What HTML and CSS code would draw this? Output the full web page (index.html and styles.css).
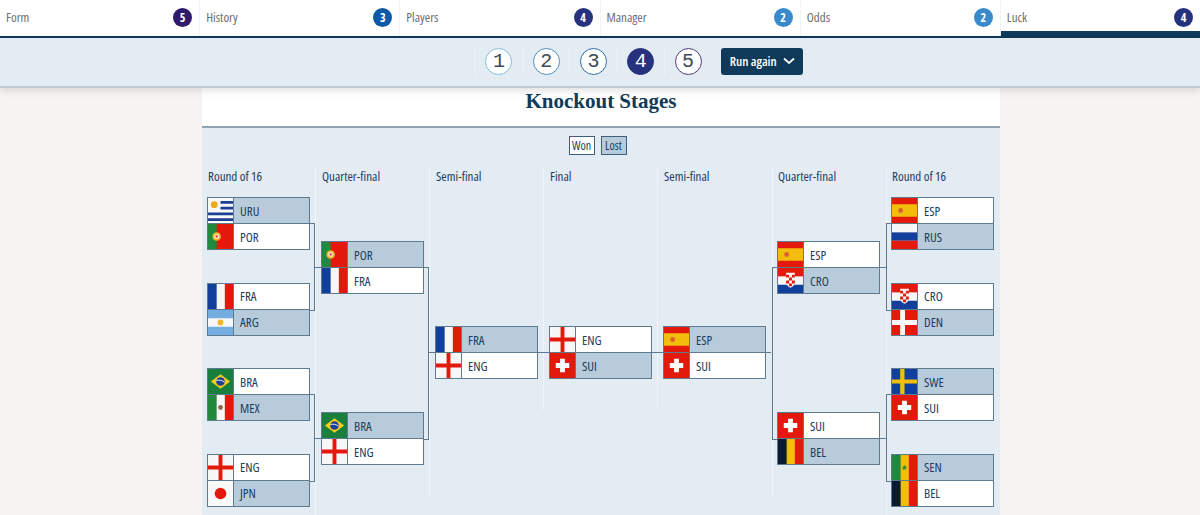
FILE: index.html
```html
<!DOCTYPE html>
<html lang="en">
<head>
    <meta charset="UTF-8">
    <meta name="viewport" content="width=device-width, initial-scale=1.0">
    <title>Knockout Stages</title>
    <link rel="stylesheet" href="styles.css">
</head>
<body>

    <!-- Flag symbols -->
    <svg class="flag-defs" xmlns="http://www.w3.org/2000/svg">
        <symbol id="f-uru" viewBox="0 0 26 26">
            <rect width="26" height="26" fill="#f7f7f7"/>
            <path d="M13 3h13v3H13zM13 9h13v3H13zM0 15h26v3H0zM0 21h26v3H0z" fill="#1d3f94"/>
            <circle cx="6.500" cy="7" r="3.500" fill="#f0a818"/>
        </symbol>
        <symbol id="f-por" viewBox="0 0 26 26">
            <rect width="26" height="26" fill="#e3190c"/>
            <rect width="9" height="26" fill="#1f8a3b"/>
            <circle cx="9" cy="13" r="4.500" fill="#f2b42a"/>
            <circle cx="9" cy="13" r="2.500" fill="#f4f0e8"/>
            <circle cx="9" cy="13" r="1.200" fill="#d33"/>
        </symbol>
        <symbol id="f-fra" viewBox="0 0 26 26">
            <rect width="26" height="26" fill="#f7f7f7"/>
            <rect width="9" height="26" fill="#123f9c"/>
            <rect x="17.500" width="8.500" height="26" fill="#e3190c"/>
        </symbol>
        <symbol id="f-arg" viewBox="0 0 26 26">
            <rect width="26" height="26" fill="#f7f7f7"/>
            <path d="M0 0h26v8.700H0zM0 17.300h26V26H0z" fill="#75ade0"/>
            <circle cx="13" cy="13" r="3" fill="#f0b828"/>
        </symbol>
        <symbol id="f-bra" viewBox="0 0 26 26">
            <rect width="26" height="26" fill="#1a7f3c"/>
            <path d="M13 5.500 23 13 13 20.500 3 13z" fill="#f6ce1a"/>
            <circle cx="13" cy="13" r="4.500" fill="#1d3f94"/>
            <path d="M8.700 12c3-.8 6-.3 8.500 1.600" stroke="#f4f4f4" fill="none"/>
        </symbol>
        <symbol id="f-mex" viewBox="0 0 26 26">
            <rect width="26" height="26" fill="#f7f7f7"/>
            <rect width="9" height="26" fill="#1f8a3b"/>
            <rect x="17.500" width="8.500" height="26" fill="#e3190c"/>
            <circle cx="13" cy="13" r="2.500" fill="#8a6a44"/>
        </symbol>
        <symbol id="f-eng" viewBox="0 0 26 26">
            <rect width="26" height="26" fill="#f7f7f7"/>
            <path d="M11 0h4v11h11v4H15v11h-4V15H0v-4h11z" fill="#e3190c"/>
        </symbol>
        <symbol id="f-jpn" viewBox="0 0 26 26">
            <rect width="26" height="26" fill="#f9f9f9"/>
            <circle cx="13" cy="13" r="6" fill="#e3190c"/>
        </symbol>
        <symbol id="f-sui" viewBox="0 0 26 26">
            <rect width="26" height="26" fill="#e3190c"/>
            <path d="M10.500 6h5v4.500H20v5h-4.500V20h-5v-4.500H6v-5h4.500z" fill="#fff"/>
        </symbol>
        <symbol id="f-esp" viewBox="0 0 26 26">
            <rect width="26" height="26" fill="#e3190c"/>
            <rect y="6.500" width="26" height="13" fill="#f2bd0d"/>
            <circle cx="9" cy="13" r="2.500" fill="#d9602a"/>
        </symbol>
        <symbol id="f-rus" viewBox="0 0 26 26">
            <rect width="26" height="26" fill="#f7f7f7"/>
            <rect y="8.700" width="26" height="8.700" fill="#123f9c"/>
            <rect y="17.400" width="26" height="8.600" fill="#e3190c"/>
        </symbol>
        <symbol id="f-cro" viewBox="0 0 26 26">
            <rect width="26" height="26" fill="#f7f7f7"/>
            <rect width="26" height="8.700" fill="#e3190c"/>
            <rect y="17.400" width="26" height="8.600" fill="#123f9c"/>
            <path d="M8.500 5h9v10c0 3-2.500 4.500-4.500 5.500C11 19.500 8.500 18 8.500 15z" fill="#f7f7f7"/>
            <path d="M8.500 7h3v3h-3zM14.500 7h3v3h-3zM11.500 10h3v3h-3zM8.500 13h3v3h-3zM14.500 13h3v3h-3zM11.500 16h3v3h-3z" fill="#e3190c"/>
        </symbol>
        <symbol id="f-den" viewBox="0 0 26 26">
            <rect width="26" height="26" fill="#e3190c"/>
            <path d="M8.500 0h5v10.500H26v5H13.500V26h-5V15.500H0v-5h8.500z" fill="#f7f7f7"/>
        </symbol>
        <symbol id="f-swe" viewBox="0 0 26 26">
            <rect width="26" height="26" fill="#123f9c"/>
            <path d="M8.500 0h4.500v11h13v4H13v11H8.500V15H0v-4h8.500z" fill="#f2bd0d"/>
        </symbol>
        <symbol id="f-sen" viewBox="0 0 26 26">
            <rect width="26" height="26" fill="#f2bd0d"/>
            <rect width="9" height="26" fill="#1f8a3b"/>
            <rect x="17.500" width="8.500" height="26" fill="#e3190c"/>
            <path d="m13 10 .8 2.200h2.300l-1.900 1.400.7 2.300-1.900-1.400-1.900 1.400.7-2.300-1.900-1.400h2.300z" fill="#1f8a3b"/>
        </symbol>
        <symbol id="f-bel" viewBox="0 0 26 26">
            <rect width="26" height="26" fill="#f2bd0d"/>
            <rect width="9" height="26" fill="#0a1a30"/>
            <rect x="17.500" width="8.500" height="26" fill="#e3190c"/>
        </symbol>
    </svg>

    <!-- Top tabs -->
    <nav class="tabs">
        <a class="tab">Form <span class="badge badge-5">5</span></a>
        <a class="tab">History <span class="badge badge-3">3</span></a>
        <a class="tab">Players <span class="badge badge-4">4</span></a>
        <a class="tab">Manager <span class="badge badge-2">2</span></a>
        <a class="tab">Odds <span class="badge badge-2">2</span></a>
        <a class="tab tab-active">Luck <span class="badge badge-4">4</span></a>
    </nav>

    <!-- Score picker -->
    <div class="picker">
        <span class="pick-wrap"><span class="pick pick-1">1</span></span>
        <span class="pick-wrap"><span class="pick pick-2">2</span></span>
        <span class="pick-wrap"><span class="pick pick-3">3</span></span>
        <span class="pick-wrap"><span class="pick pick-4">4</span></span>
        <span class="pick-wrap"><span class="pick pick-5">5</span></span>
        <button class="run-btn" type="button">Run again
            <svg width="12" height="8" viewBox="0 0 12 8"><path d="M1 1.500 6 6l5-4.500" fill="none" stroke="#fff" stroke-width="1.800"/></svg>
        </button>
    </div>

    <main class="article">
        <h2 class="article-title">Knockout Stages</h2>

        <section class="bracket-panel">
            <div class="legend">
                <span class="legend-item">Won</span>
                <span class="legend-item legend-lost">Lost</span>
            </div>

            <div class="bracket">
                <!-- Left round of 16 -->
                <div class="round round-16 border-right">
                    <h3>Round of 16</h3>
                    <div class="match link-next">
                        <div class="team lost"><svg><use href="#f-uru"/></svg><span>URU</span></div>
                        <div class="team"><svg><use href="#f-por"/></svg><span>POR</span></div>
                    </div>
                    <div class="match">
                        <div class="team"><svg><use href="#f-fra"/></svg><span>FRA</span></div>
                        <div class="team lost"><svg><use href="#f-arg"/></svg><span>ARG</span></div>
                    </div>
                    <div class="match link-next">
                        <div class="team"><svg><use href="#f-bra"/></svg><span>BRA</span></div>
                        <div class="team lost"><svg><use href="#f-mex"/></svg><span>MEX</span></div>
                    </div>
                    <div class="match">
                        <div class="team"><svg><use href="#f-eng"/></svg><span>ENG</span></div>
                        <div class="team lost"><svg><use href="#f-jpn"/></svg><span>JPN</span></div>
                    </div>
                </div>

                <!-- Left quarter-finals -->
                <div class="round round-qf border-right">
                    <h3>Quarter-final</h3>
                    <div class="match link-next">
                        <div class="team lost"><svg><use href="#f-por"/></svg><span>POR</span></div>
                        <div class="team"><svg><use href="#f-fra"/></svg><span>FRA</span></div>
                    </div>
                    <div class="match">
                        <div class="team lost"><svg><use href="#f-bra"/></svg><span>BRA</span></div>
                        <div class="team"><svg><use href="#f-eng"/></svg><span>ENG</span></div>
                    </div>
                </div>

                <!-- Middle -->
                <div class="round round-mid round-mid-left border-right">
                    <h3>Semi-final</h3>
                    <div class="match">
                        <div class="team lost"><svg><use href="#f-fra"/></svg><span>FRA</span></div>
                        <div class="team"><svg><use href="#f-eng"/></svg><span>ENG</span></div>
                    </div>
                </div>
                <div class="round round-mid border-right">
                    <h3>Final</h3>
                    <div class="match">
                        <div class="team"><svg><use href="#f-eng"/></svg><span>ENG</span></div>
                        <div class="team lost"><svg><use href="#f-sui"/></svg><span>SUI</span></div>
                    </div>
                </div>
                <div class="round round-mid round-mid-right">
                    <h3>Semi-final</h3>
                    <div class="match">
                        <div class="team lost"><svg><use href="#f-esp"/></svg><span>ESP</span></div>
                        <div class="team"><svg><use href="#f-sui"/></svg><span>SUI</span></div>
                    </div>
                </div>

                <!-- Right quarter-finals -->
                <div class="round round-qf side-right border-left">
                    <h3>Quarter-final</h3>
                    <div class="match link-next">
                        <div class="team"><svg><use href="#f-esp"/></svg><span>ESP</span></div>
                        <div class="team lost"><svg><use href="#f-cro"/></svg><span>CRO</span></div>
                    </div>
                    <div class="match">
                        <div class="team"><svg><use href="#f-sui"/></svg><span>SUI</span></div>
                        <div class="team lost"><svg><use href="#f-bel"/></svg><span>BEL</span></div>
                    </div>
                </div>

                <!-- Right round of 16 -->
                <div class="round round-16 side-right border-left">
                    <h3>Round of 16</h3>
                    <div class="match link-next">
                        <div class="team"><svg><use href="#f-esp"/></svg><span>ESP</span></div>
                        <div class="team lost"><svg><use href="#f-rus"/></svg><span>RUS</span></div>
                    </div>
                    <div class="match">
                        <div class="team"><svg><use href="#f-cro"/></svg><span>CRO</span></div>
                        <div class="team lost"><svg><use href="#f-den"/></svg><span>DEN</span></div>
                    </div>
                    <div class="match link-next">
                        <div class="team lost"><svg><use href="#f-swe"/></svg><span>SWE</span></div>
                        <div class="team"><svg><use href="#f-sui"/></svg><span>SUI</span></div>
                    </div>
                    <div class="match">
                        <div class="team lost"><svg><use href="#f-sen"/></svg><span>SEN</span></div>
                        <div class="team"><svg><use href="#f-bel"/></svg><span>BEL</span></div>
                    </div>
                </div>
            </div>
        </section>
    </main>

</body>
</html>
```

FILE: styles.css
```css
/* General Styles */
* {
    margin: 0;
    padding: 0;
    box-sizing: border-box;
}

html, body {
    height: 515px;
    overflow: hidden;
}

body {
    font-family: 'Open Sans', 'Noto Sans', sans-serif;
    font-stretch: 75%;
    background-color: #f5f4f2;
    color: #1d3d5c;
}

.flag-defs {
    display: none;
}

/* Top tabs */
.tabs {
    display: flex;
    height: 38px;
    margin-right: -1px;
    background-color: white;
    border-bottom: 2px solid #0f3a5a;
}

.tab {
    position: relative;
    flex: 1;
    display: flex;
    align-items: center;
    justify-content: space-between;
    padding: 0 7px 2px 6px;
    font-size: 13px;
    color: #6e6e6e;
    border-right: 1px solid #f3f3f3;
}

.tab-active::after {
    content: "";
    position: absolute;
    left: 0;
    right: 0;
    bottom: -2px;
    height: 7px;
    background-color: #0f3a5a;
}

.badge {
    width: 19px;
    height: 19px;
    border-radius: 50%;
    display: flex;
    align-items: center;
    justify-content: center;
    color: white;
    font-size: 12px;
    font-weight: bold;
}

.badge-2 { background-color: #398aca; }
.badge-3 { background-color: #0c5aa6; }
.badge-4 { background-color: #27327f; }
.badge-5 { background-color: #2f1a6b; }

/* Score picker */
.picker {
    position: relative;
    z-index: 2;
    height: 50px;
    padding: 0 0 2px 78px;
    display: flex;
    align-items: center;
    justify-content: center;
    background-color: #e3ebf3;
    border-bottom: 2px solid #c0cbd5;
    box-shadow: 0 2px 8px rgba(0, 0, 0, 0.14);
}

.pick-wrap {
    width: 47.300px;
    height: 27px;
    display: flex;
    justify-content: center;
    border-left: 1px solid #edf2f7;
}

.pick {
    width: 27px;
    height: 27px;
    border-radius: 50%;
    border: 1px solid #888;
    background-color: white;
    display: flex;
    align-items: center;
    justify-content: center;
    font-family: 'Liberation Mono', monospace;
    font-size: 20px;
    color: #3c4a5a;
}

.pick-1 { border-color: #86bcdc; }
.pick-2 { border-color: #4f8dbd; }
.pick-3 { border-color: #2c6ca6; }
.pick-4 { border-color: #27327f; background-color: #27327f; color: white; }
.pick-5 { border-color: #4d3a7d; }

.run-btn {
    margin-left: 10px;
    width: 82px;
    height: 27px;
    display: flex;
    align-items: center;
    justify-content: center;
    gap: 6px;
    border: none;
    border-radius: 3px;
    background-color: #0f3a5a;
    color: white;
    font-family: inherit;
    font-stretch: inherit;
    font-size: 13px;
    font-weight: 600;
}

/* Article */
.article {
    width: 798px;
    margin-left: 202px;
    background-color: white;
}

.article-title {
    height: 40px;
    border-bottom: 2px solid #8ea3b3;
    font-family: 'Liberation Serif', serif;
    font-size: 21px;
    line-height: 26px;
    text-align: center;
    color: #0f3a5a;
}

.bracket-panel {
    background-color: #e3ebf3;
    height: 400px;
    padding-top: 8px;
}

.legend {
    display: flex;
    justify-content: center;
    gap: 6px;
    height: 32px;
    padding-right: 7px;
}

.legend-item {
    width: 26px;
    height: 19px;
    border: 1px solid #3d5f7a;
    background-color: white;
    font-size: 12px;
    line-height: 17px;
    text-align: center;
}

.legend-lost {
    background-color: #b8cbda;
}

/* Bracket */
.bracket {
    display: flex;
    align-items: flex-start;
}

.round {
    width: 114px;
    padding-left: 5px;
}

.round h3 {
    height: 29px;
    padding-left: 1px;
    font-size: 13px;
    font-weight: normal;
    line-height: 16px;
}

.round-16 { height: 360px; }
.round-qf { height: 327px; }
.round-mid { height: 242px; }

.border-right { border-right: 1px solid #f1f5f9; }
.border-left { border-left: 1px solid #f1f5f9; }

.round-16 .match { margin-bottom: 32.500px; }
.round-qf .match:first-of-type { margin-top: 44px; }
.round-qf .match { margin-bottom: 118px; }
.round-mid .match { margin-top: 129px; }

.side-right { padding-left: 4px; }

.match {
    position: relative;
    width: 103px;
    height: 53px;
    border: 1px solid #5d7a8f;
    background-color: white;
}

.team {
    height: 25px;
    display: flex;
    align-items: center;
    font-size: 13px;
    line-height: 16px;
}

.team + .team {
    height: 26px;
    border-top: 1px solid #5d7a8f;
}

.team svg {
    width: 26px;
    height: 100%;
    flex-shrink: 0;
    border-right: 1px solid #5d7a8f;
}

.team span {
    padding-left: 6px;
}

.lost {
    background-color: #b8cbda;
}

/* Bracket lines, drawn over the boxes */
.link-next::after {
    content: "";
    position: absolute;
    top: 25px;
    height: 86px;
    width: 5px;
    left: 100%;
    border: 1px solid #5d7a8f;
    border-left: none;
}

.round-qf .link-next::after {
    height: 171px;
}

.side-right .link-next::after {
    left: auto;
    right: 100%;
    border: 1px solid #5d7a8f;
    border-right: none;
}

.round-qf .match::before {
    content: "";
    position: absolute;
    top: 25px;
    left: -7px;
    width: 7px;
    height: 1px;
    background-color: #5d7a8f;
}

.side-right.round-qf .match::before {
    left: auto;
    right: -7px;
}

.round-mid .match::before {
    content: "";
    position: absolute;
    top: 25px;
    left: -12px;
    width: 12px;
    height: 1px;
    background-color: #5d7a8f;
}

.round-mid-left .match::before {
    left: -7px;
    width: 7px;
}

.round-mid-right .match::after {
    content: "";
    position: absolute;
    top: 25px;
    left: 100%;
    width: 6px;
    height: 1px;
    background-color: #5d7a8f;
}
```
